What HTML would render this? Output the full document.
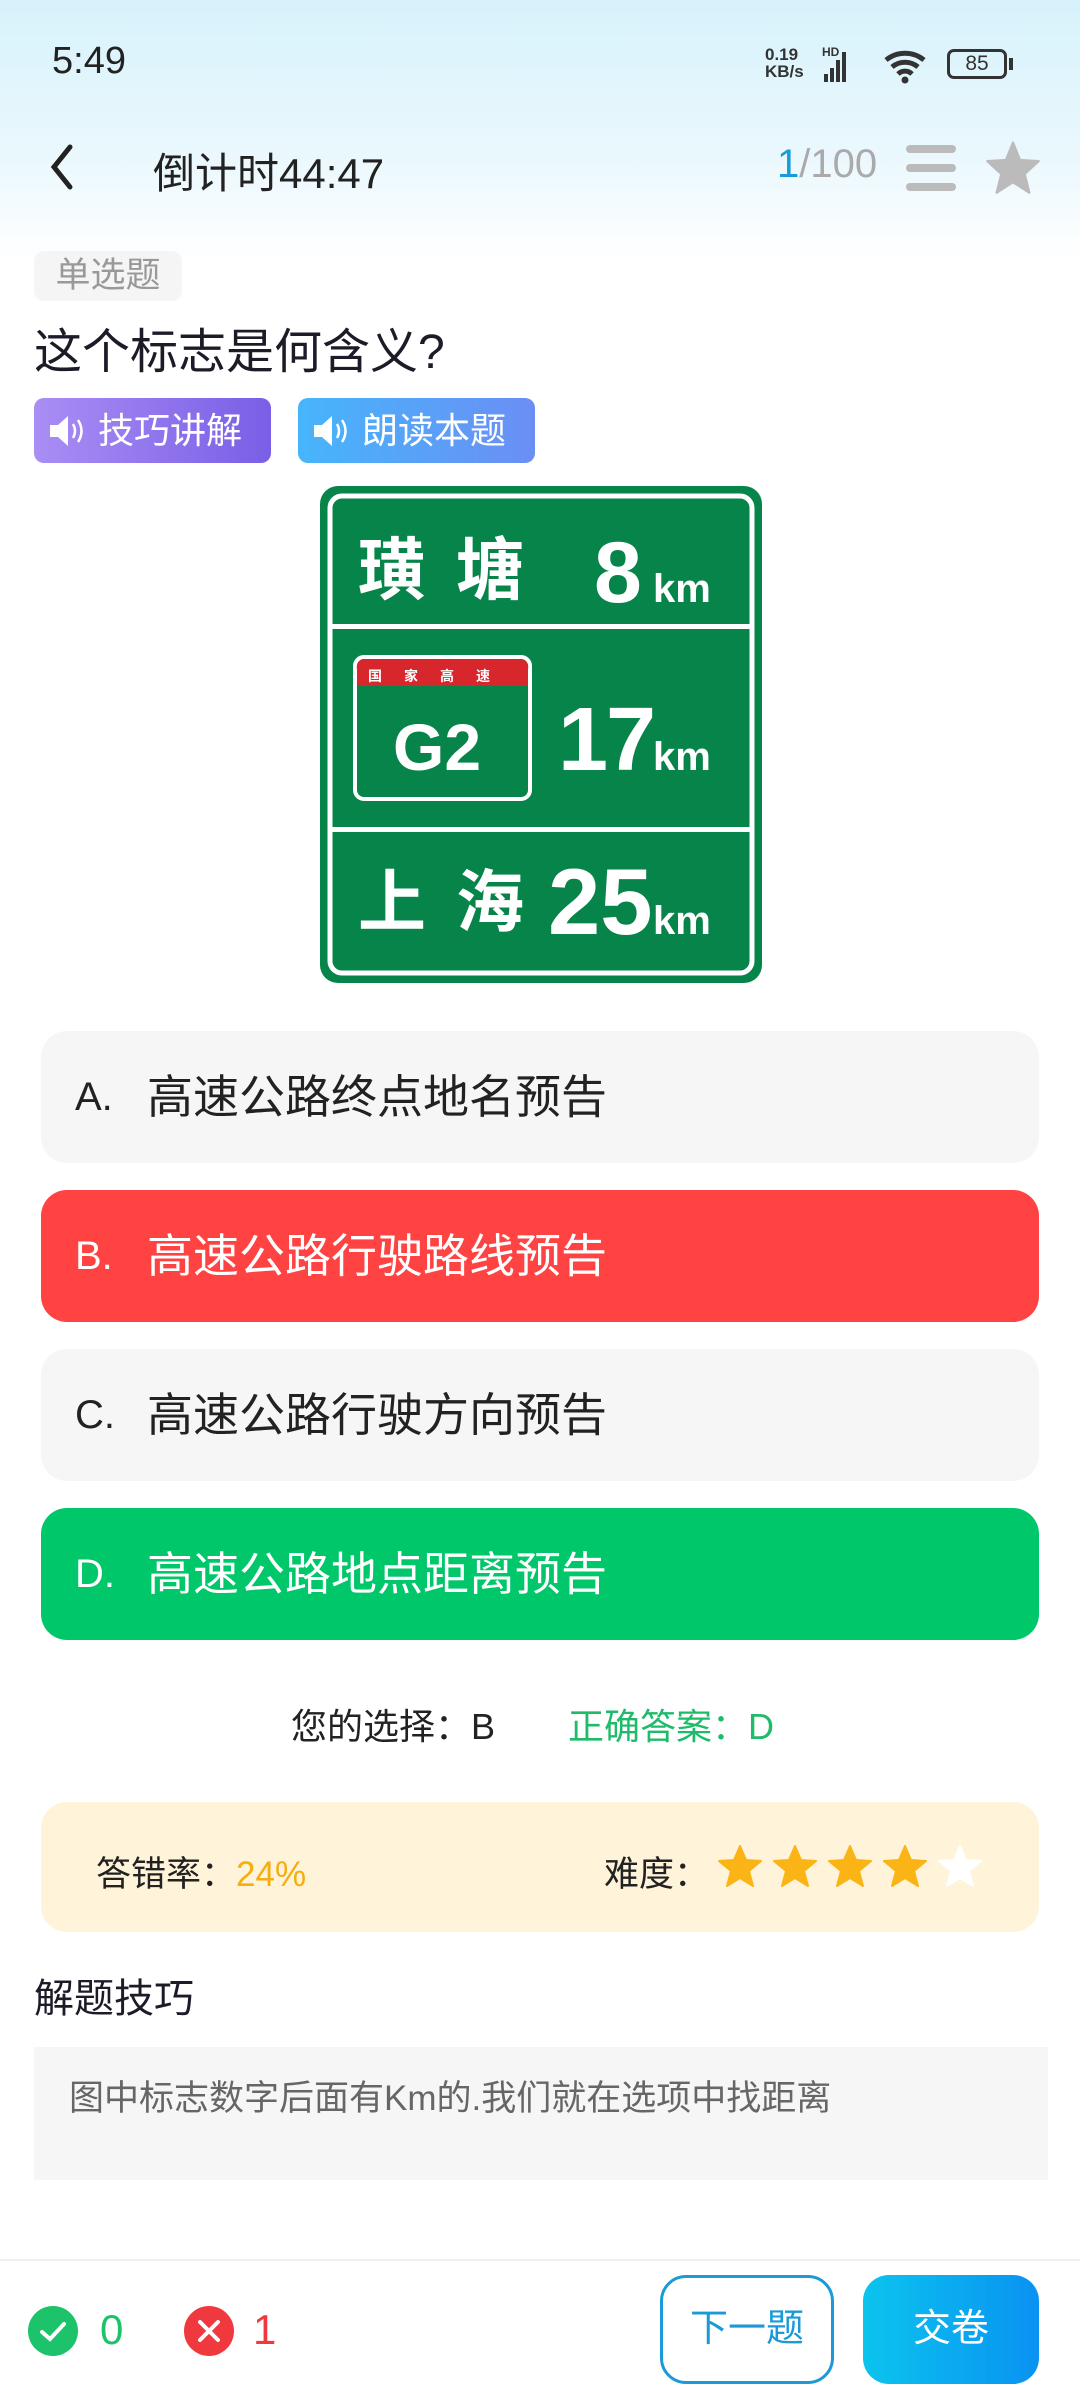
<!DOCTYPE html>
<html><head><meta charset="utf-8"><style>
*{margin:0;padding:0;box-sizing:border-box}
body{width:1080px;height:2400px;position:relative;overflow:hidden;background:#fff;font-family:"Liberation Sans","Noto Sans CJK SC",sans-serif;color:#1c1c28}
.hdr{position:absolute;left:0;top:0;width:1080px;height:260px;background:linear-gradient(#d7f2fb,#eaf8fd 60%,#fff)}
.a{position:absolute;white-space:nowrap}
.opt{position:absolute;left:41px;width:998px;height:132px;border-radius:26px;background:#f6f6f6;font-size:46px;line-height:132px;color:#222}
.opt .l{position:absolute;left:34px;font-size:40px}
.opt .t{position:absolute;left:106px}
</style></head><body>
<div class="hdr"></div>
<div class="a" style="left:52px;top:40px;font-size:38px;color:#222">5:49</div>
<div class="a" style="left:765px;top:46px;font-size:17px;font-weight:bold;line-height:17px;color:#333">0.19<br>KB/s</div>
<div class="a" style="left:822px;top:45px;font-size:12px;font-weight:bold;color:#333">HD</div>
<svg class="a" style="left:818px;top:44px" width="50" height="40" viewBox="0 0 50 40"><rect x="6" y="30" width="4" height="8" fill="#333"/><rect x="12" y="24" width="4" height="14" fill="#333"/><rect x="18" y="16" width="4" height="22" fill="#333"/><rect x="24" y="8" width="4" height="30" fill="#333"/></svg>
<svg class="a" style="left:882px;top:46px" width="50" height="40" viewBox="0 0 50 40"><path d="M4 14 A30 30 0 0 1 42 14" stroke="#333" stroke-width="5" fill="none"/><path d="M10 21 A20 20 0 0 1 36 21" stroke="#333" stroke-width="5" fill="none"/><path d="M16 28 A10 10 0 0 1 30 28" stroke="#333" stroke-width="5" fill="none"/><circle cx="23" cy="34" r="3.5" fill="#333"/></svg>
<div class="a" style="left:947px;top:49px;width:60px;height:30px;border:3px solid #333;border-radius:7px;font-size:21px;text-align:center;line-height:24px;color:#333">85</div>
<div class="a" style="left:1009px;top:58px;width:4px;height:12px;background:#333"></div>
<svg class="a" style="left:46px;top:143px" width="34" height="48" viewBox="0 0 34 48"><path d="M24 4 L8 24 L24 44" stroke="#222" stroke-width="5" fill="none" stroke-linecap="round"/></svg>
<div class="a" style="left:153px;top:140px;font-size:42px;color:#222">倒计时44:47</div>
<div class="a" style="left:777px;top:142px;font-size:40px;color:#aaa"><span style="color:#1a9ad6">1</span>/100</div>
<svg class="a" style="left:906px;top:145px" width="52" height="46"><rect x="0" y="0" width="50" height="8" rx="4" fill="#bbb"/><rect x="0" y="19" width="50" height="8" rx="4" fill="#bbb"/><rect x="0" y="38" width="50" height="8" rx="4" fill="#bbb"/></svg>
<svg class="a" style="left:985px;top:140px" width="56" height="54" viewBox="0 0 24 23"><path d="M12 1 L15 8.5 L23 9 L17 14.5 L19 22.5 L12 18 L5 22.5 L7 14.5 L1 9 L9 8.5 Z" fill="#bbb" stroke="#bbb" stroke-linejoin="round"/></svg>
<div class="a" style="left:34px;top:251px;width:148px;height:50px;background:#f5f5f5;border-radius:10px;font-size:35px;line-height:50px;text-align:center;color:#999">单选题</div>
<div class="a" style="left:34px;top:312px;font-size:48px;color:#1c1c28">这个标志是何含义?</div>
<div class="a" style="left:34px;top:398px;width:237px;height:65px;border-radius:10px;background:linear-gradient(90deg,#a98ef5,#7a5ee6);color:#fff;font-size:36px;line-height:65px;padding-left:64px">技巧讲解</div>
<div class="a" style="left:298px;top:398px;width:237px;height:65px;border-radius:10px;background:linear-gradient(90deg,#46b5fb,#6b8ef5);color:#fff;font-size:36px;line-height:65px;padding-left:64px">朗读本题</div>
<svg class="a" style="left:48px;top:413px" width="40" height="36" viewBox="0 0 40 36"><path d="M2 12 h8 l10-9 v30 l-10-9 h-8z" fill="#fff"/><path d="M25 11 q4 7 0 14 M30 7 q7 11 0 22" stroke="#fff" stroke-width="2.5" fill="none"/></svg>
<svg class="a" style="left:312px;top:413px" width="40" height="36" viewBox="0 0 40 36"><path d="M2 12 h8 l10-9 v30 l-10-9 h-8z" fill="#fff"/><path d="M25 11 q4 7 0 14 M30 7 q7 11 0 22" stroke="#fff" stroke-width="2.5" fill="none"/></svg>
<svg class="a" style="left:320px;top:486px" width="442" height="497" viewBox="0 0 442 497" font-family="Liberation Sans,Noto Sans CJK SC,sans-serif" font-weight="bold" fill="#fff">
<rect x="0" y="0" width="442" height="497" rx="18" fill="#07844a"/>
<rect x="10" y="10" width="422" height="477" rx="12" fill="none" stroke="#fff" stroke-width="5"/>
<rect x="12" y="138" width="418" height="5"/><rect x="12" y="341" width="418" height="5"/>
<text x="38" y="108" font-size="68" font-family="Noto Sans CJK SC,sans-serif">璜</text>
<text x="136" y="108" font-size="68" font-family="Noto Sans CJK SC,sans-serif">塘</text>
<text x="274" y="116" font-size="86">8</text><text x="333" y="116" font-size="40">km</text>
<rect x="35" y="171" width="175" height="142" rx="9" fill="#07844a" stroke="#fff" stroke-width="4"/>
<path d="M37 183 a8 8 0 0 1 8 -10 h155 a8 8 0 0 1 8 10 v17 h-171z" fill="#d8262d"/>
<text x="48" y="195" font-size="14" font-family="Noto Sans CJK SC,sans-serif" letter-spacing="22">国家高速</text>
<text x="73" y="284" font-size="66">G2</text>
<text x="238" y="284" font-size="90" letter-spacing="-2">17</text>
<text x="333" y="284" font-size="40">km</text>
<text x="38" y="440" font-size="68" font-family="Noto Sans CJK SC,sans-serif">上</text>
<text x="136" y="440" font-size="68" font-family="Noto Sans CJK SC,sans-serif">海</text>
<text x="228" y="448" font-size="94">25</text><text x="333" y="448" font-size="40">km</text>
</svg>
<div class="opt" style="top:1031px"><span class="l">A.</span><span class="t">高速公路终点地名预告</span></div>
<div class="opt" style="top:1190px;background:#ff4242;color:#fff"><span class="l">B.</span><span class="t">高速公路行驶路线预告</span></div>
<div class="opt" style="top:1349px"><span class="l">C.</span><span class="t">高速公路行驶方向预告</span></div>
<div class="opt" style="top:1508px;background:#00c76a;color:#fff"><span class="l">D.</span><span class="t">高速公路地点距离预告</span></div>
<div class="a" style="left:291px;top:1698px;font-size:36px;color:#222">您的选择：B</div>
<div class="a" style="left:568px;top:1698px;font-size:36px;color:#1fbb6a">正确答案：D</div>
<div class="a" style="left:41px;top:1802px;width:998px;height:130px;border-radius:26px;background:#fff3d9"></div>
<div class="a" style="left:96px;top:1846px;font-size:35px;color:#222">答错率：<span style="color:#f5ad10">24%</span></div>
<div class="a" style="left:604px;top:1846px;font-size:35px;color:#222">难度：</div>
<svg class="a" style="left:718px;top:1844px" width="272" height="48" viewBox="0 0 272 48">
<g id="s"><path d="M22 2 L28 16 L43 17 L31 27 L35 42 L22 34 L9 42 L13 27 L1 17 L16 16 Z" fill="#fbb416" stroke="#fbb416" stroke-width="2" stroke-linejoin="round"/></g>
<use href="#s" x="55"/><use href="#s" x="110"/><use href="#s" x="165"/>
<path transform="translate(220,0)" d="M22 2 L28 16 L43 17 L31 27 L35 42 L22 34 L9 42 L13 27 L1 17 L16 16 Z" fill="#fff" stroke="#fff" stroke-width="2" stroke-linejoin="round"/>
</svg>
<div class="a" style="left:34px;top:1966px;font-size:40px;color:#1c1c28">解题技巧</div>
<div class="a" style="left:34px;top:2047px;width:1014px;height:133px;background:#f6f6f6"></div>
<div class="a" style="left:69px;top:2070px;font-size:35px;color:#666">图中标志数字后面有Km的.我们就在选项中找距离</div>
<div class="a" style="left:0;top:2259px;width:1080px;height:2px;background:#f0f0f0"></div>
<svg class="a" style="left:28px;top:2306px" width="50" height="50"><circle cx="25" cy="25" r="25" fill="#1cc36a"/><path d="M14 26 L22 33 L36 18" stroke="#fff" stroke-width="4" fill="none" stroke-linecap="round"/></svg>
<div class="a" style="left:100px;top:2306px;font-size:42px;color:#1cc36a">0</div>
<svg class="a" style="left:184px;top:2306px" width="50" height="50"><circle cx="25" cy="25" r="25" fill="#f0393e"/><path d="M16 16 L34 34 M34 16 L16 34" stroke="#fff" stroke-width="4" stroke-linecap="round"/></svg>
<div class="a" style="left:253px;top:2306px;font-size:42px;color:#f0393e">1</div>
<div class="a" style="left:660px;top:2275px;width:174px;height:109px;border:3px solid #1a9ad6;border-radius:26px;font-size:38px;line-height:103px;text-align:center;color:#1a9ad6">下一题</div>
<div class="a" style="left:863px;top:2275px;width:176px;height:109px;border-radius:26px;background:linear-gradient(90deg,#0bc4ee,#0a92f2);font-size:38px;line-height:109px;text-align:center;color:#fff">交卷</div>
</body></html>
